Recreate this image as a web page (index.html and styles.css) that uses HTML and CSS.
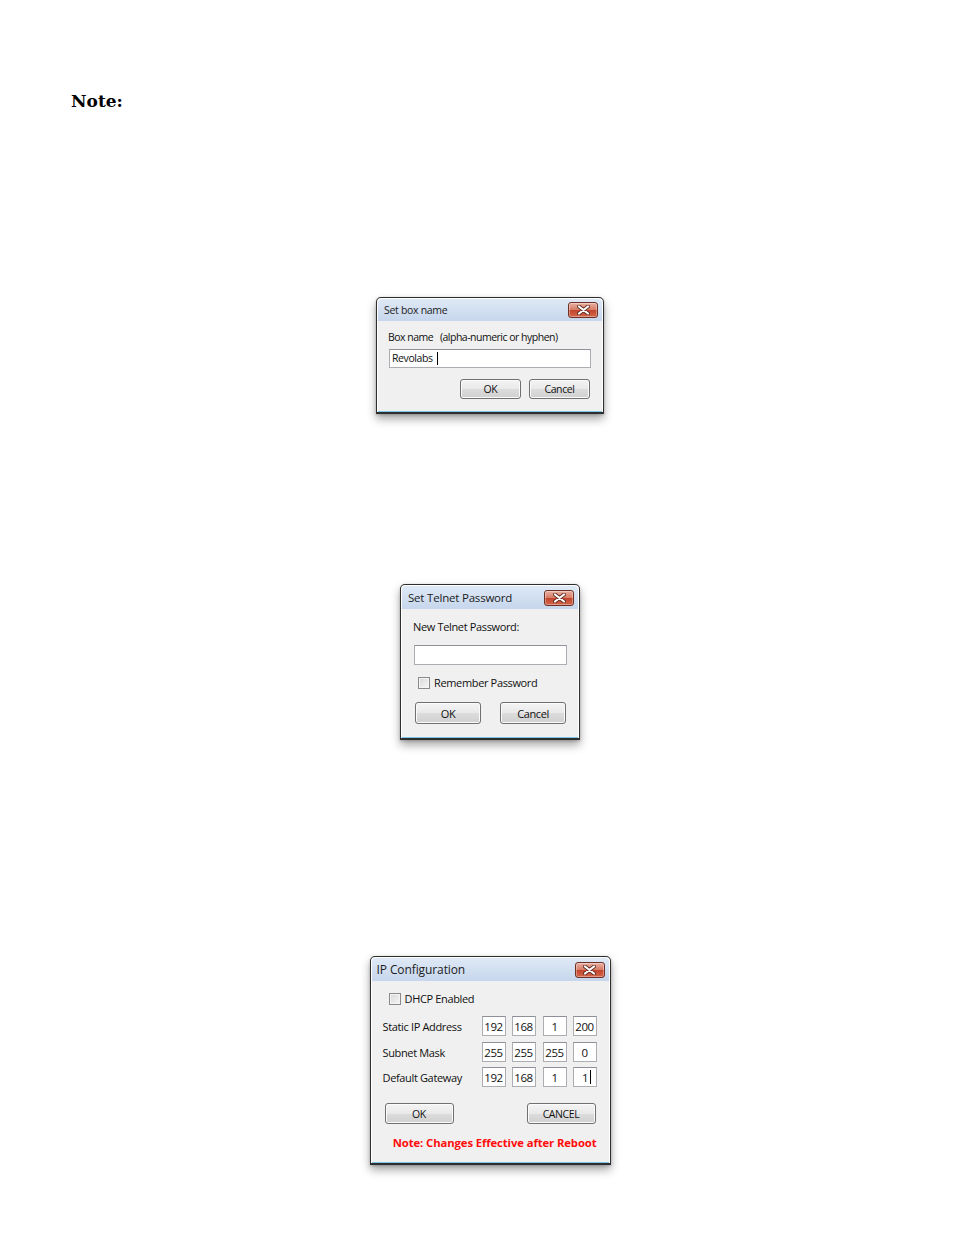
FILE: index.html
```html
<!DOCTYPE html>
<html>
<head>
<meta charset="utf-8">
<link rel="stylesheet" href="styles.css">
</head>
<body>
<div class="page">
  <div class="note">Note:</div>

  <div class="fig fig1">
    <div class="dialog d1">
      <div class="titlebar">
        <span class="title">Set box name</span>
        <span class="close"><svg width="13" height="10" viewBox="0 0 13 10"><path d="M2 1.5 L11 8.5 M11 1.5 L2 8.5" stroke="#5a2a22" stroke-width="3.8" stroke-linecap="round"/><path d="M2 1.5 L11 8.5 M11 1.5 L2 8.5" stroke="#fff" stroke-width="2.2" stroke-linecap="round"/></svg></span>
      </div>
      <div class="body">
        <div class="label">Box name&nbsp;&nbsp;&nbsp;(alpha-numeric or hyphen)</div>
        <div class="input"><span>Revolabs</span><span class="caret"></span></div>
        <div class="btnrow">
          <div class="btn">OK</div>
          <div class="btn">Cancel</div>
        </div>
      </div>
    </div>
  </div>

  <div class="fig fig2">
    <div class="dialog d2">
      <div class="titlebar">
        <span class="title">Set Telnet Password</span>
        <span class="close"><svg width="13" height="10" viewBox="0 0 13 10"><path d="M2 1.5 L11 8.5 M11 1.5 L2 8.5" stroke="#5a2a22" stroke-width="3.8" stroke-linecap="round"/><path d="M2 1.5 L11 8.5 M11 1.5 L2 8.5" stroke="#fff" stroke-width="2.2" stroke-linecap="round"/></svg></span>
      </div>
      <div class="body">
        <div class="label">New Telnet Password:</div>
        <div class="input"></div>
        <div class="check"><span class="box"></span><span>Remember Password</span></div>
        <div class="btnrow">
          <div class="btn">OK</div>
          <div class="btn">Cancel</div>
        </div>
      </div>
    </div>
  </div>

  <div class="fig fig3">
    <div class="dialog d3">
      <div class="titlebar">
        <span class="title">IP Configuration</span>
        <span class="close"><svg width="13" height="10" viewBox="0 0 13 10"><path d="M2 1.5 L11 8.5 M11 1.5 L2 8.5" stroke="#5a2a22" stroke-width="3.8" stroke-linecap="round"/><path d="M2 1.5 L11 8.5 M11 1.5 L2 8.5" stroke="#fff" stroke-width="2.2" stroke-linecap="round"/></svg></span>
      </div>
      <div class="body">
        <div class="check"><span class="box"></span><span>DHCP Enabled</span></div>
        <div class="iprow r1">
          <span class="iplabel">Static IP Address</span>
          <span class="ip">192</span><span class="ip">168</span><span class="ip">1</span><span class="ip">200</span>
        </div>
        <div class="iprow r2">
          <span class="iplabel">Subnet Mask</span>
          <span class="ip">255</span><span class="ip">255</span><span class="ip">255</span><span class="ip">0</span>
        </div>
        <div class="iprow r3">
          <span class="iplabel">Default Gateway</span>
          <span class="ip">192</span><span class="ip">168</span><span class="ip">1</span><span class="ip"><span class="one">1</span><span class="caret"></span></span>
        </div>
        <div class="btnrow">
          <div class="btn">OK</div>
          <div class="btn">CANCEL</div>
        </div>
        <div class="warn">Note: Changes Effective after Reboot</div>
      </div>
    </div>
  </div>
</div>
</body>
</html>
```

FILE: styles.css
```css
* { box-sizing: border-box; }
html, body { margin: 0; background: #fff; }
body { width: 954px; height: 1235px; overflow: hidden; }
.page { padding-top: 91px; }

.note {
  margin-left: 71px;
  font-family: "DejaVu Serif", "Liberation Serif", serif;
  font-weight: bold;
  font-size: 17px;
  line-height: 20px;
  color: #000;
}

.fig { display: flex; justify-content: center; padding-left: 26px; }
.fig1 { margin-top: 186px; }
.fig2 { margin-top: 170px; }
.fig3 { margin-top: 216px; }

.dialog {
  border: 1px solid #2e2e2e;
  border-bottom-width: 2px;
  border-radius: 5px 5px 0 0;
  background: #fff;
  padding: 1px 1px 0 1px;
  box-shadow: 0 5px 10px rgba(0,0,0,0.35), 0 1px 3px rgba(0,0,0,0.2);
  font-family: "Open Sans", "DejaVu Sans", sans-serif;
  font-size: 11px;
  color: #111;
}
.d1 { width: 228px; }
.d2 { width: 180px; }
.d3 { width: 241px; }

.titlebar {
  display: flex;
  justify-content: space-between;
  align-items: center;
  height: 22px;
  padding: 0 4px 0 6px;
  background: linear-gradient(#dfe9f6, #c6d6ec);
  border-radius: 4px 4px 0 0;
}
.d2 .titlebar, .d3 .titlebar { height: 23px; }
.title { font-size: 11.5px; letter-spacing: -0.2px; color: #1c1c1c; }
.d1 .title { font-size: 10.5px; letter-spacing: -0.3px; }
.d3 .title { font-size: 12px; letter-spacing: -0.1px; }
.d3 .titlebar { padding-left: 5px; }

.close {
  display: flex;
  align-items: center;
  justify-content: center;
  width: 30px;
  height: 16px;
  border: 1px solid #6e3025;
  border-radius: 3px;
  background: linear-gradient(#e9b0a2, #d67b64 50%, #c2452c 51%, #d2664a);
  box-shadow: inset 0 0 0 1px rgba(255,255,255,0.35);
}

.body {
  background: #f0f0f0;
  border-bottom: 1px solid #7cc6e6;
  display: flex;
  flex-direction: column;
}
.d1 .body { padding: 9px 11px 12px 10px; }
.d2 .body { padding: 11px 11px 13px 11px; }
.d3 .body { padding: 11px 11px 12px 10px; }

.label { line-height: 14px; letter-spacing: -0.35px; }
.d1 .label { font-size: 10.5px; letter-spacing: -0.5px; }

.input {
  background: #fff;
  border: 1px solid #abadb3;
  border-top-color: #8e9097;
  height: 19px;
  line-height: 17px;
  padding-left: 2px;
  letter-spacing: -0.4px;
  font-size: 10.5px;
  display: flex;
  align-items: center;
}
.d1 .input { margin-top: 5px; margin-left: 1px; }
.d2 .input { margin-top: 11px; margin-left: 1px; height: 20px; }

.caret { display: inline-block; width: 1px; height: 13px; background: #000; margin-left: 4px; }

.check { display: flex; align-items: center; height: 14px; line-height: 14px; letter-spacing: -0.35px; }
.box {
  width: 12px; height: 12px;
  border: 1px solid #8a8a8a;
  background: linear-gradient(135deg, #d8d8d8, #f6f6f6);
  box-shadow: inset 0 0 0 1px #f4f4f4;
  margin-right: 4px;
}
.d2 .check { margin-top: 11px; margin-left: 5px; }
.d3 .check { margin-left: 7px; }

.btnrow { display: flex; }
.btn {
  height: 20px;
  border: 1px solid #707070;
  border-radius: 3px;
  background: linear-gradient(#f4f4f4, #e9e9e9 50%, #dcdcdc 51%, #d0d0d0);
  box-shadow: inset 0 0 0 1px #fbfbfb;
  display: flex;
  align-items: center;
  justify-content: center;
  font-size: 10.5px;
  letter-spacing: -0.4px;
  color: #111;
}
.d1 .btnrow { margin-top: 11px; justify-content: flex-end; gap: 8px; padding-right: 1px; }
.d1 .btn { width: 61px; }
.d2 .btnrow { margin-top: 12px; justify-content: space-between; padding-left: 2px; padding-right: 1px; }
.d2 .btn { width: 66px; height: 22px; font-size: 11px; }
.d3 .btnrow { margin-top: 16px; justify-content: space-between; padding-left: 3px; padding-right: 2px; }
.d3 .btn { width: 69px; height: 21px; }

.iprow { display: flex; align-items: center; height: 20px; }
.r1 { margin-top: 10px; }
.r2 { margin-top: 6px; }
.r3 { margin-top: 5px; }
.iplabel { width: 100px; padding-left: 1px; letter-spacing: -0.35px; }
.ip {
  width: 24px; height: 20px;
  margin-left: 6px;
  background: #fff;
  border: 1px solid #abadb3;
  border-top-color: #8e9097;
  display: flex; align-items: center; justify-content: center;
  font-size: 11.5px;
  letter-spacing: -0.4px;
}
.iplabel + .ip { margin-left: 0; }
.ip:nth-of-type(4) { margin-left: 7px; }
.ip .one { margin-left: 4px; }
.ip .caret { height: 14px; margin-left: 2px; }

.warn {
  margin-top: 12px;
  text-align: right;
  padding-right: 1px;
  line-height: 14px;
  font-weight: bold;
  color: #ff0d0d;
  font-size: 11.3px;
  letter-spacing: -0.1px;
}
```
